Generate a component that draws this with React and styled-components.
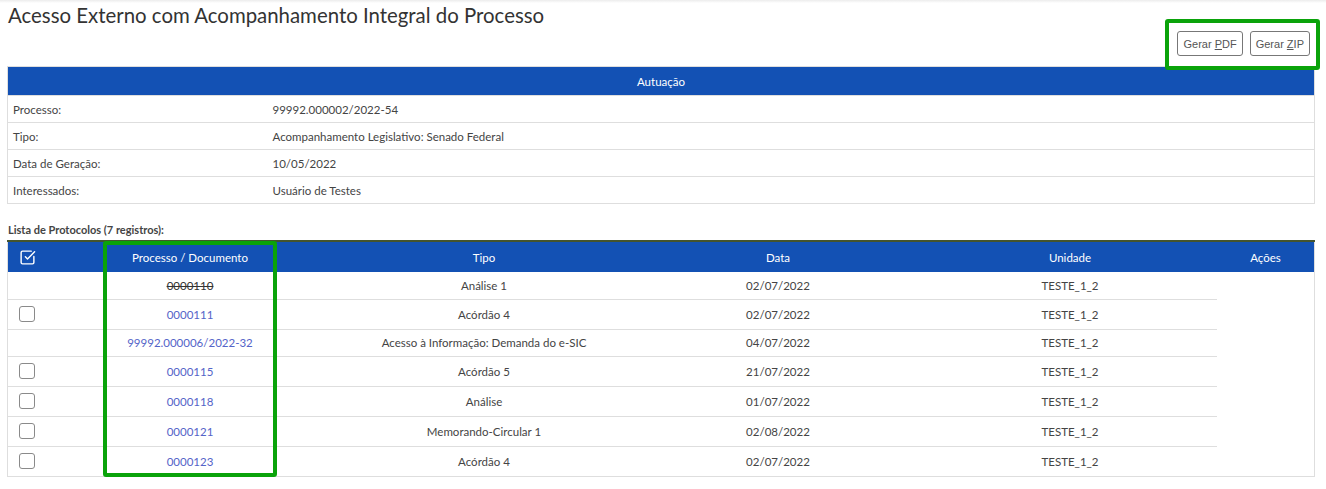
import React from 'react'
import styled, { createGlobalStyle } from 'styled-components'
import { SquareCheckBig } from 'lucide-react'

const GlobalStyle = createGlobalStyle`
  body {
    margin: 0;
    background: #fff;
    font-family: Lato, "Open Sans", sans-serif;
    color: #333;
  }
  *, *::before, *::after { box-sizing: border-box; }
`

const BLUE = '#1351b4'
const GREEN = '#0aa30a'
const LINE = '#dedede'

const TopShade = styled.div`
  height: 3px;
  background: linear-gradient(#ececec, #fff);
`

const Page = styled.div`
  padding: 0 11px 0 7px;
`

const Title = styled.h1`
  margin: 0;
  height: 16px;
  padding-left: 1px;
  font-size: 20.4px;
  line-height: 24px;
  font-weight: 400;
  color: #333;
  white-space: nowrap;
`

const Toolbar = styled.div`
  display: flex;
  justify-content: flex-end;
  margin-right: -5px;
  margin-bottom: -4px;
`

const ButtonBox = styled.div`
  display: flex;
  gap: 7px;
  padding: 8px 6px 10px 8px;
  border: 4px solid ${GREEN};
  border-radius: 3px;
  background: #fff;
`

const Button = styled.button`
  height: 25px;
  padding: 0 5px;
  background: #fff;
  border: 1px solid #777;
  border-radius: 3px;
  font-family: "Liberation Sans", Arial, sans-serif;
  font-size: 11px;
  color: #555;
  cursor: pointer;
  u { text-decoration: underline; }
`

const Table = styled.table`
  width: 100%;
  border-collapse: collapse;
  table-layout: fixed;
  font-size: 11.5px;
`

const InfoTable = styled(Table)`
  border: 1px solid ${LINE};
`

const HeadCell = styled.th`
  background: ${BLUE};
  color: #fff;
  font-weight: 400;
  text-align: ${p => p.$left ? 'left' : 'center'};
  height: ${p => p.$h || 29}px;
  padding: 0 0 0 ${p => p.$pl || 0}px;
  vertical-align: middle;
`

const InfoRow = styled.tr`
  border-top: 1px solid ${LINE};
`

const InfoCell = styled.td`
  height: 27px;
  padding: 0 5px;
  vertical-align: middle;
  color: #444;
`

const SectionLabel = styled.div`
  margin-top: 19px;
  padding-left: 1px;
  font-size: 11px;
  font-weight: 700;
  color: #444;
  height: 19px;
  border-bottom: 2px solid #44542e;
`

const ListWrap = styled.div`
  position: relative;
  border: 1px solid ${LINE};
  border-top: none;
`

const BodyRow = styled.tr``

const Cell = styled.td`
  height: ${p => p.$tall ? 30 : 27}px;
  padding: 0 0 0 ${p => p.$pl || 0}px;
  text-align: ${p => p.$left ? 'left' : 'center'};
  vertical-align: middle;
  border-bottom: ${p => p.$noLine ? 'none' : `1px solid ${LINE}`};
  color: #444;
`

const Link = styled.a`
  color: ${p => p.$cancelled ? '#333' : '#5464c8'};
  text-decoration: ${p => p.$cancelled ? 'line-through' : 'none'};
`

const Check = styled.span`
  display: inline-block;
  width: 16px;
  height: 16px;
  border: 1px solid #8a8a8a;
  border-radius: 3px;
  vertical-align: middle;
`

const Highlight = styled.div`
  position: absolute;
  left: 95px;
  top: -1px;
  width: 174px;
  bottom: -1px;
  border: 4px solid ${GREEN};
  border-radius: 3px;
  pointer-events: none;
`

const HeadIcon = styled.span`
  display: inline-flex;
  vertical-align: middle;
`

const rows = [
  { doc: '0000110', cancelled: true, tipo: 'Análise 1', data: '02/07/2022', check: false },
  { doc: '0000111', tipo: 'Acórdão 4', data: '02/07/2022', check: true },
  { doc: '99992.000006/2022-32', tipo: 'Acesso à Informação: Demanda do e-SIC', data: '04/07/2022', check: false },
  { doc: '0000115', tipo: 'Acórdão 5', data: '21/07/2022', check: true },
  { doc: '0000118', tipo: 'Análise', data: '01/07/2022', check: true },
  { doc: '0000121', tipo: 'Memorando-Circular 1', data: '02/08/2022', check: true },
  { doc: '0000123', tipo: 'Acórdão 4', data: '02/07/2022', check: true },
]

const info = [
  ['Processo:', '99992.000002/2022-54'],
  ['Tipo:', 'Acompanhamento Legislativo: Senado Federal'],
  ['Data de Geração:', '10/05/2022'],
  ['Interessados:', 'Usuário de Testes'],
]

export default function App() {
  return (
    <>
      <GlobalStyle />
      <TopShade />
      <Page>
        <Title>Acesso Externo com Acompanhamento Integral do Processo</Title>
        <Toolbar>
          <ButtonBox>
            <Button>Gerar <u>P</u>DF</Button>
            <Button>Gerar <u>Z</u>IP</Button>
          </ButtonBox>
        </Toolbar>

        <InfoTable>
          <colgroup>
            <col style={{ width: 260 }} />
            <col />
          </colgroup>
          <thead>
            <tr><HeadCell colSpan={2}>Autuação</HeadCell></tr>
          </thead>
          <tbody>
            {info.map(([k, v]) => (
              <InfoRow key={k}>
                <InfoCell>{k}</InfoCell>
                <InfoCell>{v}</InfoCell>
              </InfoRow>
            ))}
          </tbody>
        </InfoTable>

        <SectionLabel>Lista de Protocolos (7 registros):</SectionLabel>
        <ListWrap>
          <Table>
            <colgroup>
              <col style={{ width: 95 }} />
              <col style={{ width: 174 }} />
              <col style={{ width: 414 }} />
              <col style={{ width: 174 }} />
              <col style={{ width: 352 }} />
              <col />
            </colgroup>
            <thead>
              <tr>
                <HeadCell $left $pl={11} $h={30}>
                  <HeadIcon><SquareCheckBig size={17} strokeWidth={2} color="#fff" /></HeadIcon>
                </HeadCell>
                <HeadCell $h={30}>Processo / Documento</HeadCell>
                <HeadCell $h={30}>Tipo</HeadCell>
                <HeadCell $h={30}>Data</HeadCell>
                <HeadCell $h={30} $pl={58}>Unidade</HeadCell>
                <HeadCell $h={30}>Ações</HeadCell>
              </tr>
            </thead>
            <tbody>
              {rows.map((r, i) => {
                const last = i === rows.length - 1
                return (
                  <BodyRow key={i}>
                    <Cell $left $pl={11} $tall={r.check} $noLine={last}>
                      {r.check && <Check />}
                    </Cell>
                    <Cell $tall={r.check} $noLine={last}>
                      <Link href="#" $cancelled={r.cancelled}>{r.doc}</Link>
                    </Cell>
                    <Cell $tall={r.check} $noLine={last}>{r.tipo}</Cell>
                    <Cell $tall={r.check} $noLine={last}>{r.data}</Cell>
                    <Cell $tall={r.check} $pl={58} $noLine={last}>TESTE_1_2</Cell>
                    <Cell $tall={r.check} $noLine />
                  </BodyRow>
                )
              })}
            </tbody>
          </Table>
          <Highlight />
        </ListWrap>
      </Page>
    </>
  )
}
